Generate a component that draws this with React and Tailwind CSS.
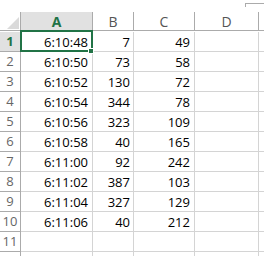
import React from 'react'

const rows = [
  ['6:10:48', 7, 49],
  ['6:10:50', 73, 58],
  ['6:10:52', 130, 72],
  ['6:10:54', 344, 78],
  ['6:10:56', 323, 109],
  ['6:10:58', 40, 165],
  ['6:11:00', 92, 242],
  ['6:11:02', 387, 103],
  ['6:11:04', 327, 129],
  ['6:11:06', 40, 212],
  ['', '', ''],
  ['', '', ''],
]

const font = { fontFamily: '"Open Sans", "Liberation Sans", sans-serif' }

export default function App() {
  return (
    <div className="w-[264px] h-[256px] overflow-hidden bg-white" style={font}>
      {/* strip above the headers, with the edge of the name box */}
      <div className="h-[12px] flex justify-end">
        <div className="mt-[3px] w-[19px] h-[4px] border-l border-t border-[#ababab]" />
      </div>

      <div className="relative">
        <div className="grid grid-cols-[21px_72px_41px_61px_64px_1fr] auto-rows-[20px]">
          {/* header row */}
          <div className="h-[19px] border-r border-b border-[#ababab] bg-white flex items-end justify-end pr-[1px] pb-[1px]">
            <svg width="12" height="12" viewBox="0 0 12 12">
              <polygon points="12,0 12,12 0,12" fill="#dadada" />
            </svg>
          </div>
          <div className="h-[19px] border-r border-b border-[#ababab] bg-[#e1e1e1] flex items-center justify-center text-[14px] font-bold text-[#217346]">A</div>
          <div className="h-[19px] border-r border-b border-[#ababab] bg-white flex items-center justify-center text-[14px] text-[#555]">B</div>
          <div className="h-[19px] border-r border-b border-[#ababab] bg-white flex items-center justify-center text-[14px] text-[#555]">C</div>
          <div className="h-[19px] border-r border-b border-[#ababab] bg-white flex items-center justify-center text-[14px] text-[#555]">D</div>
          <div className="h-[19px] border-b border-[#ababab] bg-white" />

          {rows.map((r, i) => (
            <React.Fragment key={i}>
              <div
                className={
                  i === 0
                    ? 'border-r border-b border-[#ababab] bg-[#e1e1e1] flex items-center justify-center text-[13px] font-bold text-[#217346]'
                    : 'border-r border-b border-[#ababab] bg-white flex items-center justify-center text-[13px] text-[#666]'
                }
              >
                {i < 11 ? i + 1 : ''}
              </div>
              <div className="border-r border-b border-[#d4d4d4] flex items-end justify-end pr-[4px] text-[13px] leading-[18px] text-black">{r[0]}</div>
              <div className="border-r border-b border-[#d4d4d4] flex items-end justify-end pr-[3px] text-[13px] leading-[18px] text-black">{r[1]}</div>
              <div className="border-r border-b border-[#d4d4d4] flex items-end justify-end pr-[4px] text-[13px] leading-[18px] text-black">{r[2]}</div>
              <div className="border-r border-b border-[#d4d4d4]" />
              <div className="border-b border-[#d4d4d4]" />
            </React.Fragment>
          ))}
        </div>

        {/* active cell A1 */}
        <div className="absolute left-[20px] top-[18px] w-[73px] h-[22px] border-2 border-[#217346]" />
        <div className="absolute left-[88px] top-[36px] w-[6px] h-[6px] bg-[#217346] border border-white" />
      </div>
    </div>
  )
}
